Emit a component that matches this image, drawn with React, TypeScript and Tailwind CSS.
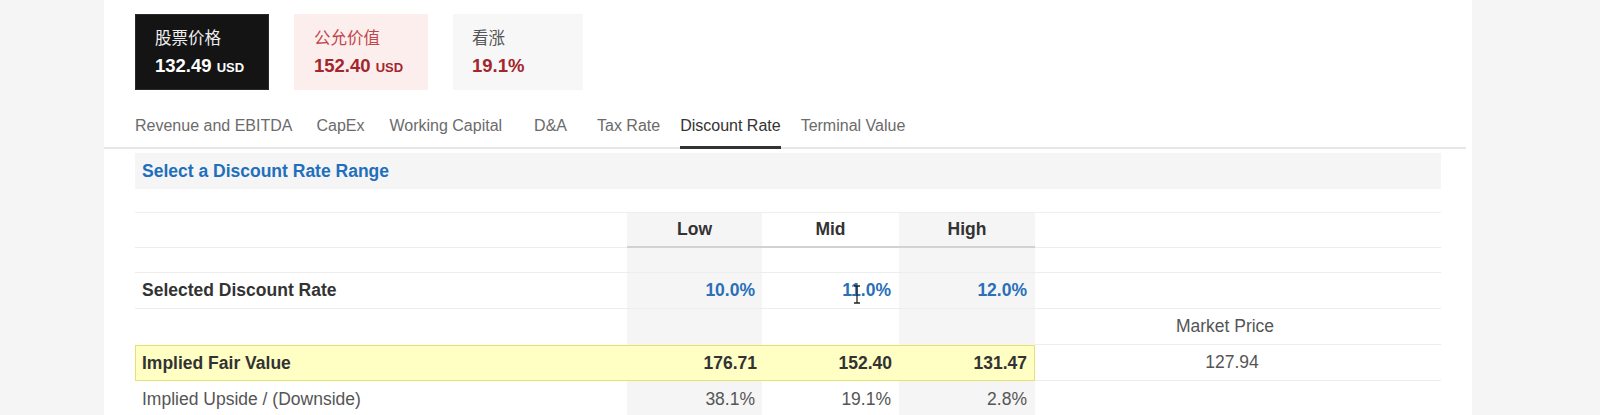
const FONT = { fontFamily: '"Liberation Sans", "Noto Sans CJK SC", Arial, sans-serif' };

const TABS = [
  { label: 'Revenue and EBITDA', ml: 'ml-0' },
  { label: 'CapEx', ml: 'ml-[24px]' },
  { label: 'Working Capital', ml: 'ml-[25px]' },
  { label: 'D&A', ml: 'ml-[32px]' },
  { label: 'Tax Rate', ml: 'ml-[30px]' },
  { label: 'Discount Rate', ml: 'ml-[20px]', active: true },
  { label: 'Terminal Value', ml: 'ml-[20px]' },
];

const COLS = 'grid grid-cols-[492px_135px_137px_136px_1fr]';

function Cursor() {
  return (
    <svg className="absolute left-[91px] top-[12px]" width="8" height="19" viewBox="0 0 8 19">
      <path d="M1 1h2.5l0.5 0.8 0.5-0.8H7M4 1.8v15.4M1 18h2.5l0.5-0.8 0.5 0.8H7" fill="none" stroke="#222" strokeWidth="1.3" />
    </svg>
  );
}

export default function App() {
  return (
    <div className="h-[415px] overflow-hidden bg-[#f5f5f5]" style={FONT}>
      <div className="ml-[104px] w-[1368px] h-full bg-white">
        {/* summary cards */}
        <div className="flex gap-[25px] pl-[31px] pt-[14px]">
          <div className="w-[134px] h-[76px] bg-[#141414] border border-[#2a2a2a] pl-[19px] pt-[12px]">
            <div className="text-[16.5px] leading-[22px] text-[#eeeeee]">股票价格</div>
            <div className="mt-[6px] text-[18.5px] leading-[22px] font-bold text-white">
              132.49 <span className="text-[13px]">USD</span>
            </div>
          </div>
          <div className="w-[134px] h-[76px] bg-[#fdeeee] pl-[20px] pt-[13px]">
            <div className="text-[16.5px] leading-[22px] text-[#c0464b]">公允价值</div>
            <div className="mt-[6px] text-[18.5px] leading-[22px] font-bold text-[#a3262d]">
              152.40 <span className="text-[13px]">USD</span>
            </div>
          </div>
          <div className="w-[130px] h-[76px] bg-[#f7f7f7] pl-[19px] pt-[13px]">
            <div className="text-[16.5px] leading-[22px] text-[#555555]">看涨</div>
            <div className="mt-[6px] text-[18.5px] leading-[22px] font-bold text-[#a3262d]">19.1%</div>
          </div>
        </div>

        {/* tabs */}
        <div className="mt-[12px] mr-[6px] h-[47px] flex items-end pl-[31px] border-b-2 border-[#e6e6e6]">
          {TABS.map((t) => (
            <div
              key={t.label}
              className={`${t.ml} -mb-[2px] pb-[10px] text-[16px] leading-[21px] border-b-[3px] ${
                t.active ? 'border-[#333333] text-[#333333]' : 'border-transparent text-[#6b6b6b]'
              }`}
            >
              {t.label}
            </div>
          ))}
        </div>

        {/* section header */}
        <div className="ml-[31px] w-[1306px] mt-[4px] h-[36px] bg-[#f5f5f5] flex items-center pl-[7px]">
          <span className="text-[17.5px] font-bold text-[#1f6fbd]">Select a Discount Rate Range</span>
        </div>

        {/* table */}
        <div className="ml-[31px] w-[1306px] mt-[23px] text-[17.5px] text-[#333333]">
          <div className={`${COLS} h-[36px] border-t border-[#efefef]`}>
            <div className="border-b border-[#ececec]" />
            <div className="bg-[#f5f5f5] border-b-2 border-[#d2d2d2] flex items-center justify-center font-bold">Low</div>
            <div className="border-b-2 border-[#d2d2d2] flex items-center justify-center font-bold">Mid</div>
            <div className="bg-[#f5f5f5] border-b-2 border-[#d2d2d2] flex items-center justify-center font-bold">High</div>
            <div className="border-b border-[#ececec]" />
          </div>

          <div className={`${COLS} h-[25px] border-b border-[#ededed]`}>
            <div />
            <div className="bg-[#f5f5f5]" />
            <div />
            <div className="bg-[#f5f5f5]" />
            <div />
          </div>

          <div className={`${COLS} h-[36px] border-b border-[#ededed]`}>
            <div className="flex items-center pl-[7px] font-bold">Selected Discount Rate</div>
            <div className="bg-[#f5f5f5] flex items-center justify-end pr-[7px] font-bold text-[#2a6fb8]">10.0%</div>
            <div className="relative flex items-center justify-end pr-[8px] font-bold text-[#2a6fb8]">
              11.0%
              <Cursor />
            </div>
            <div className="bg-[#f5f5f5] flex items-center justify-end pr-[8px] font-bold text-[#2a6fb8]">12.0%</div>
            <div />
          </div>

          <div className={`${COLS} h-[36px]`}>
            <div />
            <div className="bg-[#f5f5f5]" />
            <div />
            <div className="bg-[#f5f5f5]" />
            <div className="flex items-center justify-center pr-[26px] text-[#555555] border-b border-[#ededed]">Market Price</div>
          </div>

          <div className={`${COLS} h-[36px]`}>
            <div className="col-span-4 grid grid-cols-[492px_135px_137px_1fr] bg-[#ffffc4] border border-[#e6df72] font-bold text-[#333333]">
              <div className="flex items-center pl-[6px]">Implied Fair Value</div>
              <div className="flex items-center justify-end pr-[6px]">176.71</div>
              <div className="flex items-center justify-end pr-[8px]">152.40</div>
              <div className="flex items-center justify-end pr-[7px]">131.47</div>
            </div>
            <div className="flex items-center justify-center pr-[12px] text-[#555555] border-b border-[#ededed]">127.94</div>
          </div>

          <div className={`${COLS} h-[36px] text-[#555555]`}>
            <div className="flex items-center pl-[7px]">Implied Upside / (Downside)</div>
            <div className="bg-[#f5f5f5] flex items-center justify-end pr-[7px]">38.1%</div>
            <div className="flex items-center justify-end pr-[8px]">19.1%</div>
            <div className="bg-[#f5f5f5] flex items-center justify-end pr-[8px]">2.8%</div>
            <div />
          </div>
        </div>
      </div>
    </div>
  );
}
